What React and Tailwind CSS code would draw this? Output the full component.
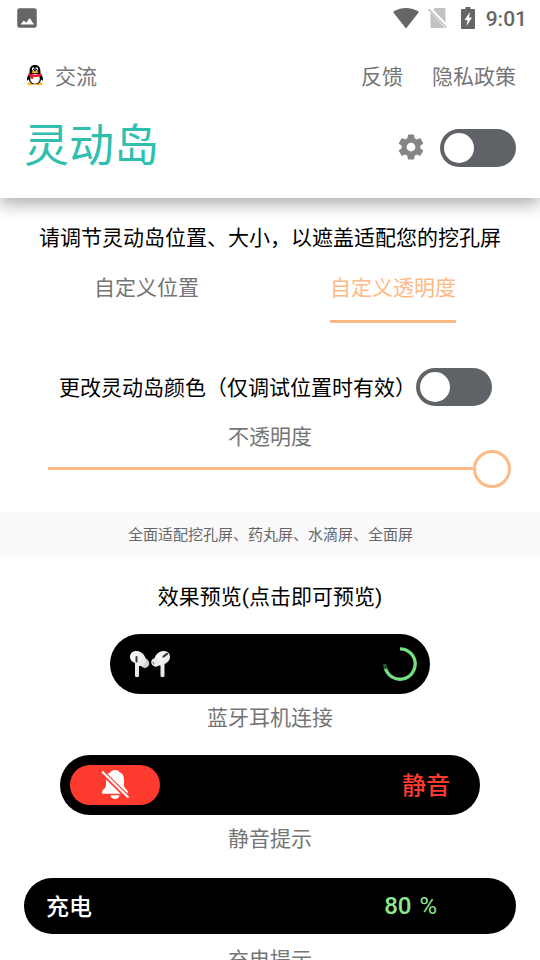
import React from 'react';

function Toggle() {
  return (
    <button role="switch" aria-checked="false" className="flex h-[38px] w-[76px] shrink-0 items-center rounded-full bg-[#5f6368] pl-1">
      <span className="h-[30px] w-[30px] rounded-full bg-white" />
    </button>
  );
}

function StatusBar() {
  return (
    <div className="flex h-9 items-center pr-[13px] pl-[14px] text-[#666]">
      <svg width="26" height="26" viewBox="0 0 24 24" fill="currentColor">
        <path d="M21 19V5c0-1.100-.9-2-2-2H5c-1.100 0-2 .9-2 2v14c0 1.100.9 2 2 2h14c1.100 0 2-.9 2-2zM6 18l3-3.700 2.200 2 3.300-4.300L18.500 18z" />
      </svg>
      <svg className="ml-auto" width="26" height="21" viewBox="0 0 26 21" fill="currentColor">
        <path d="M0 4C7.500-1.300 18.500-1.300 26 4L13 20.500z" />
      </svg>
      <svg className="ml-[9px]" width="20" height="22" viewBox="0 0 20 22">
        <path d="M7 1h9a1.500 1.500 0 0 1 1.500 1.500V20a1 1 0 0 1-1 1h-13a1 1 0 0 1-1-1V5.500z" fill="#c2c2c2" />
        <path d="M0 0l19 20" stroke="#fff" strokeWidth="4" />
        <path d="M.5 2l18 18.500" stroke="#c2c2c2" strokeWidth="1.700" />
      </svg>
      <svg className="ml-[13px]" width="14" height="22" viewBox="0 0 14 22">
        <path d="M4.500 0h5v2H13a1 1 0 0 1 1 1v18a1 1 0 0 1-1 1H1a1 1 0 0 1-1-1V3a1 1 0 0 1 1-1h3.500z" fill="#666" />
        <path d="M9 5L3.500 13h3L5.500 19 11 10.500H8z" fill="#fff" />
      </svg>
      <span className="ml-[11px] h-6 pt-px font-['Roboto',sans-serif] text-[21px] leading-6 font-medium">9:01</span>
    </div>
  );
}

function Penguin() {
  return (
    <svg className="-mt-0.5 mr-0.5" width="20" height="22" viewBox="0 0 22 24">
      <ellipse cx="7" cy="21.700" rx="4.500" ry="1.500" fill="#fbb216" />
      <ellipse cx="15" cy="21.700" rx="4.500" ry="1.500" fill="#fbb216" />
      <path d="M11 1C6.800 1 5 4 5 8v2C3.600 12 2 14.500 2.200 17.500c.3 1.200 1.200.3 2-.9C5 20.500 7 22 11 22s6-1.500 6.800-5.400c.8 1.200 1.700 2.100 2 .9.200-3-1.400-5.500-2.800-7.500V8c0-4-1.800-7-6-7z" fill="#000" />
      <ellipse cx="11" cy="16" rx="5.300" ry="5.500" fill="#fff" />
      <ellipse cx="9" cy="5.500" rx="1.500" ry="2" fill="#fff" />
      <ellipse cx="13" cy="5.500" rx="1.500" ry="2" fill="#fff" />
      <circle cx="9.400" cy="5.800" r=".8" />
      <circle cx="12.700" cy="5.800" r=".8" />
      <ellipse cx="11" cy="8.800" rx="3.800" ry="1.300" fill="#fbb216" />
      <path d="M4.200 10c4 2 9.600 2 13.600 0l.7 2.500c-3 1.600-6.500 2-9.500 1.600v2.300l-2.700-.4v-2.500l-2.800-1z" fill="#ed1c2c" />
    </svg>
  );
}

function Header() {
  return (
    <header className="h-[198px] bg-white shadow-[0_6px_16px_rgba(0,0,0,0.33)]">
      <StatusBar />
      <div className="flex h-20 items-center pr-6 pl-[25px] text-[21px] text-[#757575]">
        <Penguin />
        <span className="ml-2">交流</span>
        <span className="ml-auto">反馈</span>
        <span className="ml-[29px]">隐私政策</span>
      </div>
      <div className="-mt-[3px] flex h-[70px] items-center px-6">
        <h1 className="-mt-2.5 text-[45px] leading-[60px] text-[#30bfae]">灵动岛</h1>
        <svg className="mr-[14px] mb-0.5 ml-auto" width="30" height="30" viewBox="0 0 24 24" fill="#858585">
          <path d="M19.430 12.980c.04-.32.070-.64.070-.98s-.03-.66-.07-.98l2.110-1.650c.19-.15.240-.42.120-.64l-2-3.460c-.12-.22-.39-.3-.61-.22l-2.490 1c-.52-.4-1.080-.73-1.690-.98l-.38-2.650A.488.488 0 0 0 14 2h-4c-.25 0-.46.18-.49.42l-.38 2.650c-.61.25-1.170.59-1.690.98l-2.490-1c-.23-.09-.49 0-.61.22l-2 3.460c-.13.22-.07.49.12.64l2.110 1.650c-.04.32-.07.65-.07.98s.03.66.070.980l-2.110 1.650c-.19.15-.24.42-.12.640l2 3.460c.12.22.39.3.610.22l2.490-1c.52.4 1.080.73 1.690.980l.38 2.650c.03.24.24.42.490.42h4c.25 0 .46-.18.490-.42l.38-2.650c.61-.25 1.170-.59 1.690-.98l2.490 1c.23.09.49 0 .610-.22l2-3.460c.12-.22.070-.49-.12-.64zM12 15.500A3.500 3.500 0 1 1 12 8.500a3.500 3.500 0 0 1 0 7z" />
        </svg>
        <Toggle />
      </div>
    </header>
  );
}

function Caption({ children }) {
  return <p className="text-center font-['Roboto','Noto_Sans_CJK_SC',sans-serif] text-[21px] leading-6 text-[#757575]">{children}</p>;
}

function Earbuds() {
  return (
    <svg width="42" height="30" viewBox="0 0 42 30">
      <defs>
        <linearGradient id="bud" x1="0" y1="0" x2="1" y2="1">
          <stop offset="0" stopColor="#fff" />
          <stop offset="1" stopColor="#dcdce1" />
        </linearGradient>
      </defs>
      <ellipse cx="15.500" cy="14" rx="4.500" ry="5" fill="#cfcfd4" transform="rotate(-30 15.500 14)" />
      <path d="M1 8C1 4 4 2 7.500 2c5 0 9 4.500 9.500 9 .3 4-3 6.500-7 6V27c0 1.500-4 1.500-4 0V14C3 13 1 11 1 8z" fill="url(#bud)" />
      <rect x="6.500" y="7" width="2" height="6.500" rx="1" fill="#38383c" />
      <path d="M41 8c0-4-3-6-6.500-6-5 0-8 4-9 7.500-1 4.500 2 7.500 6 7V27c0 1.500 4 1.500 4 0V15c3-1.500 5.500-3.500 5.500-7z" fill="url(#bud)" />
      <ellipse cx="26.500" cy="13.500" rx="4.500" ry="4" fill="#e9e9ed" transform="rotate(35 26.500 13.500)" />
      <ellipse cx="24.500" cy="14" rx="1" ry="1.700" fill="#9d9da4" transform="rotate(-30 24.500 14)" />
      <path d="M34.500 7.500l3.500-2.700" stroke="#38383c" strokeWidth="2.200" strokeLinecap="round" />
    </svg>
  );
}

function MutedBell() {
  return (
    <svg width="28" height="30" viewBox="0 0 28 30">
      <path d="M14 0c-2.500 0-4 1.200-4.500 2.300C6 3.500 5 6.500 5 10v5.500C5 18 1 20 1 22.500c0 1 .7 1.200 1.500 1.200h23c.8 0 1.500-.2 1.500-1.200 0-2.500-4-4.500-4-7V10c0-3.500-1-6.500-4.500-7.700C18 1.200 16.500 0 14 0zM9.500 25.200h9c-.5 5-8.500 5-9 0z" fill="#fff" />
      <path d="M1.500 2.500l25.500 25" stroke="#ff3b30" strokeWidth="5" />
      <path d="M1.800 2.200l25 24.800" stroke="#fff" strokeWidth="2.200" strokeLinecap="round" />
    </svg>
  );
}

export default function App() {
  return (
    <main className="h-[960px] w-[540px] overflow-hidden bg-white font-['Noto_Sans_CJK_SC',sans-serif] text-black">
      <Header />
      <section className="h-[314px] pt-7">
        <p className="text-center font-['Roboto','Noto_Sans_CJK_SC',sans-serif] text-[21px] leading-6">请调节灵动岛位置、大小，以遮盖适配您的挖孔屏</p>
        <div className="mt-[26px] grid grid-cols-[246px_246px] justify-center font-['Roboto','Noto_Sans_CJK_SC',sans-serif] text-[21px] leading-6 text-[#757575]">
          <span className="mr-px justify-self-center">自定义位置</span>
          <span className="h-[47px] justify-self-center border-b-3 border-[#fdba86] text-[#fdba86]">自定义透明度</span>
        </div>
        <div className="mt-[45px] flex items-center justify-end pr-12 text-[21px]">
          <span>更改灵动岛颜色（仅调试位置时有效）</span>
          <Toggle />
        </div>
        <div className="mt-[19px]"><Caption>不透明度</Caption></div>
        <div className="mt-px flex h-[38px] items-center pl-12">
          <div className="-mt-px h-[3px] w-[425px] bg-[#fdba86]" />
          <div className="h-[38px] w-[38px] rounded-full border-3 border-[#fdba86] bg-white" />
        </div>
      </section>
      <div className="flex h-[45px] items-center justify-center bg-[#fafafa] pl-px text-[15px] text-[#666]">
        全面适配挖孔屏、药丸屏、水滴屏、全面屏
      </div>
      <section className="flex flex-col items-center pt-7">
        <h2 className="font-['Roboto','Noto_Sans_CJK_SC',sans-serif] text-[21px] leading-6">效果预览(点击即可预览)</h2>
        <div className="mt-[25px] flex h-[60px] w-80 items-center justify-between rounded-full bg-black pr-[13px] pl-[19px]">
          <Earbuds />
          <svg width="34" height="34" viewBox="0 0 34 34" fill="none" strokeWidth="3.300">
            <path d="M17 1.800A15.200 15.200 0 1 1 2.500 21.500" stroke="#73df82" />
            <path d="M2.500 21.500A15 15 0 0 1 1.800 17" stroke="#285b30" />
          </svg>
        </div>
        <div className="mt-3"><Caption>蓝牙耳机连接</Caption></div>
        <div className="mt-[25px] flex h-[60px] w-[420px] items-center justify-between rounded-full bg-black pr-[30px] pl-2.5">
          <div className="flex h-10 w-[90px] items-center justify-center rounded-full bg-[#ff3b30]">
            <MutedBell />
          </div>
          <span className="mb-0.5 text-[24px] font-medium text-[#ff3b30]">静音</span>
        </div>
        <div className="mt-3"><Caption>静音提示</Caption></div>
        <div className="mt-[27px] flex h-14 w-[492px] items-center justify-between rounded-full bg-black pr-[79px] pl-[22px]">
          <span className="mb-0.5 text-[23px] font-medium text-white">充电</span>
          <span className="flex items-center gap-2 font-['Roboto',sans-serif] text-[24px] text-[#8ce78f]">
            <span className="font-medium">80</span>
            <span>%</span>
          </span>
        </div>
        <div className="mt-3.5"><Caption>充电提示</Caption></div>
      </section>
    </main>
  );
}
